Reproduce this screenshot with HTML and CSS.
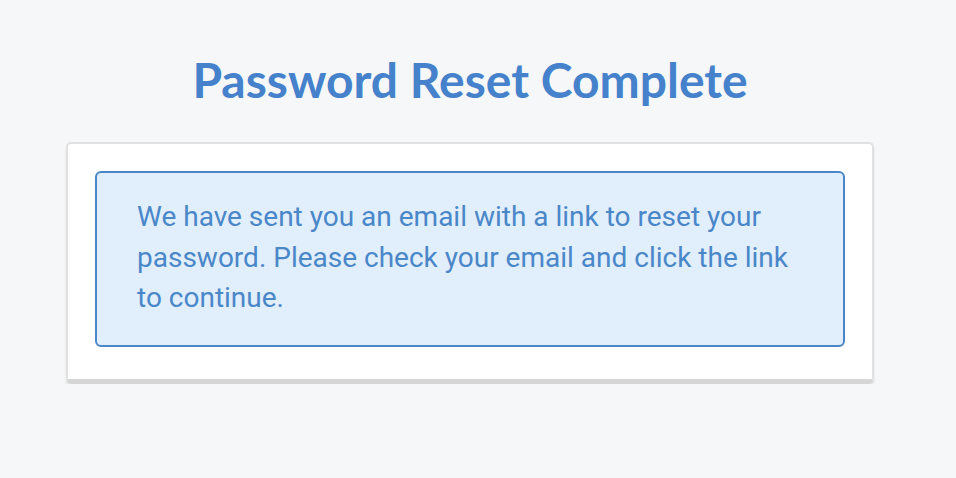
FILE: index.html
```html
<!DOCTYPE html>
<html lang="en">
<head>
<meta charset="utf-8">
<title>Password Reset Complete</title>
<link rel="stylesheet" href="styles.css">
</head>
<body>
<main class="page">
  <h1 class="title">Password Reset Complete</h1>
  <div class="card">
    <div class="alert">
      <p class="alert-text">We have sent you an email with a link to reset your password. Please check your email and click the link to continue.</p>
    </div>
  </div>
</main>
</body>
</html>
```
FILE: styles.css
```css
html, body {
  margin: 0;
  padding: 0;
  background: #f6f7f9;
}
.page {
  width: 808px;
  margin-left: 66px;
  padding-top: 51px;
  box-sizing: border-box;
}
.title {
  margin: 0 0 33px;
  text-align: center;
  font-family: Lato, "Noto Sans", sans-serif;
  font-weight: 700;
  font-size: 48px;
  line-height: 58px;
  color: #4582cb;
}
.card {
  background: #fff;
  border: 2px solid #e1e1e1;
  border-bottom: 5px solid #d6d6d6;
  border-radius: 5px;
  padding: 27px 27px 32px;
  box-shadow: 0 3px 3px rgba(0,0,0,0.08);
}
.alert {
  background: #e1eefb;
  border: 2px solid #4a86c9;
  border-radius: 6px;
  padding: 24px 40px 26px;
}
.alert-text {
  margin: 0;
  font-family: Roboto, "Liberation Sans", sans-serif;
  font-size: 28px;
  line-height: 40.5px;
  color: #4a87c9;
}
```
